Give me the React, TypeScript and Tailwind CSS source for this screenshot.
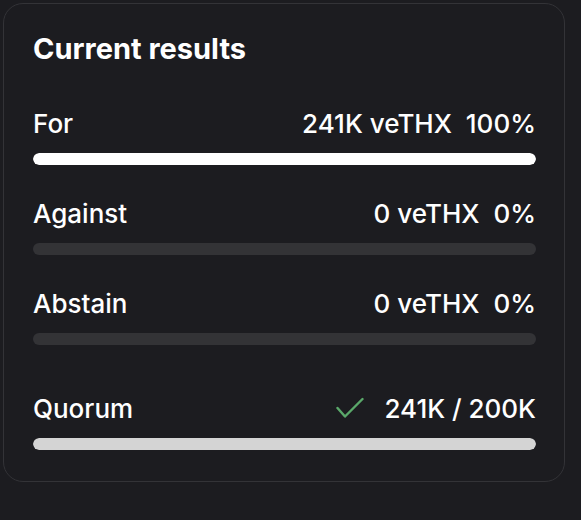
import React from "react";

function Row({ label, right, bar, barColor, extra }: { label: string; right: React.ReactNode; bar: number; barColor: string; extra?: string }) {
  return (
    <div className={"flex flex-col " + (extra ?? "")}>
      <div className="flex items-center justify-between h-[32px]">
        <span className="text-[26px] font-medium text-white">{label}</span>
        <span className="text-[26px] font-medium text-white flex items-center whitespace-pre">{right}</span>
      </div>
      <div className="mt-[14px] h-[12px] w-full rounded-full bg-[#333336] overflow-hidden">
        <div className={"h-full rounded-full " + barColor} style={{ width: `${bar}%` }} />
      </div>
    </div>
  );
}

export default function App() {
  return (
    <div className="min-h-[520px] w-[581px] bg-[#1c1c20] pt-[3px] pl-[3px]" style={{ fontFamily: "Inter, 'Noto Sans', sans-serif" }}>
      <div className="w-[562px] rounded-[20px] border border-[#333337] bg-[#1c1c20] pl-[29px] pr-[28px] pt-[27px] pb-[31px]">
        <h2 className="text-[29px] leading-[36px] font-bold text-white">Current results</h2>
        <div className="mt-[40px] flex flex-col gap-[32px]">
          <Row label="For" right="241K veTHX  100%" bar={100} barColor="bg-white" />
          <Row label="Against" right="0 veTHX  0%" bar={0} barColor="bg-white" />
          <Row label="Abstain" right="0 veTHX  0%" bar={0} barColor="bg-white" />
          <Row
            label="Quorum"
            extra="mt-[15px]"
            right={
              <>
                <svg width="28" height="22" viewBox="0 0 28 22" fill="none" stroke="#5aa86a" strokeWidth="2.4" strokeLinecap="round" strokeLinejoin="round" className="mr-[20px]">
                  <path d="M1.5 11 L9 19.5 L26.5 2" />
                </svg>
                241K / 200K
              </>
            }
            bar={100}
            barColor="bg-[#d4d4d4]"
          />
        </div>
      </div>
    </div>
  );
}
